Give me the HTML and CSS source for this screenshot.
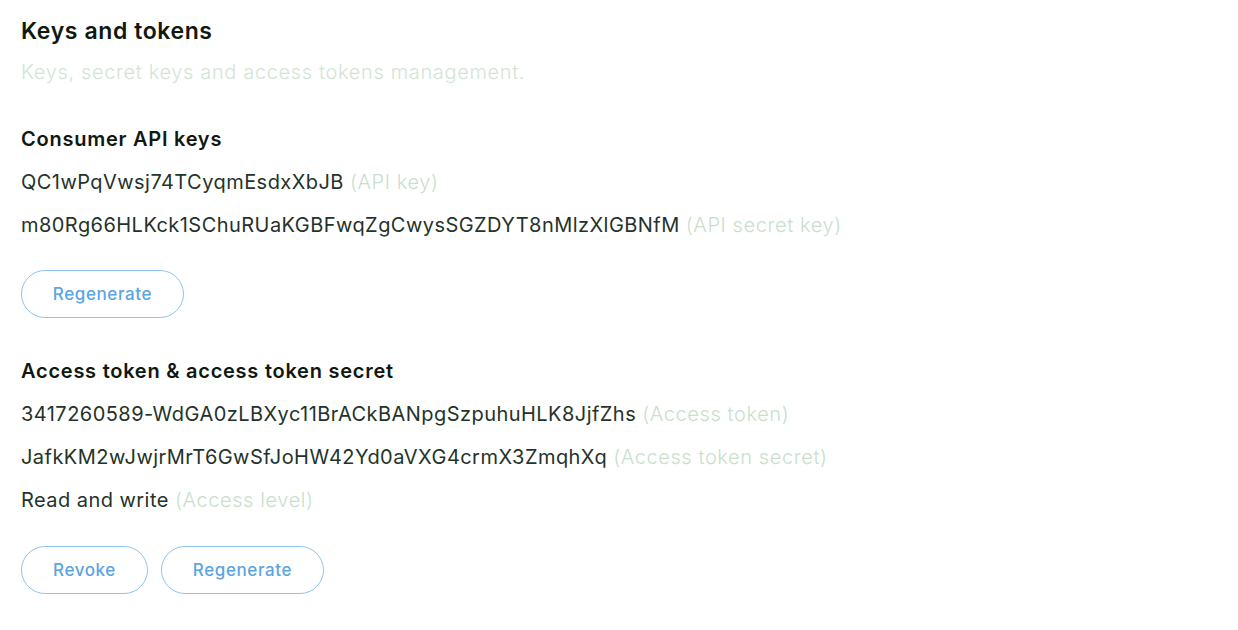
FILE: index.html
```html
<!DOCTYPE html>
<html>
<head>
<meta charset="utf-8">
<link rel="stylesheet" href="styles.css">
</head>
<body>
<main class="page">
  <h1 class="title">Keys and tokens</h1>
  <p class="subtitle">Keys, secret keys and access tokens management.</p>

  <section class="section">
    <h2 class="heading">Consumer API keys</h2>
    <p class="row">QC1wPqVwsj74TCyqmEsdxXbJB <span class="hint">(API key)</span></p>
    <p class="row">m80Rg66HLKck1SChuRUaKGBFwqZgCwysSGZDYT8nMlzXlGBNfM <span class="hint">(API secret key)</span></p>
    <div class="actions">
      <button class="btn btn-wide">Regenerate</button>
    </div>
  </section>

  <section class="section">
    <h2 class="heading">Access token &amp; access token secret</h2>
    <p class="row">3417260589-WdGA0zLBXyc11BrACkBANpgSzpuhuHLK8JjfZhs <span class="hint">(Access token)</span></p>
    <p class="row">JafkKM2wJwjrMrT6GwSfJoHW42Yd0aVXG4crmX3ZmqhXq <span class="hint">(Access token secret)</span></p>
    <p class="row">Read and write <span class="hint">(Access level)</span></p>
    <div class="actions actions-last">
      <button class="btn btn-narrow">Revoke</button>
      <button class="btn btn-wide">Regenerate</button>
    </div>
  </section>
</main>
</body>
</html>
```
FILE: styles.css
```css
html, body {
  margin: 0;
  padding: 0;
  background: #ffffff;
}
body {
  font-family: Inter, "Liberation Sans", Arial, sans-serif;
  color: #1c2a1e;
}
.page {
  padding: 17px 21px 0 21px;
  display: flex;
  flex-direction: column;
}
.title {
  margin: 0;
  font-size: 23px;
  font-weight: 600;
  letter-spacing: 0.6px;
  line-height: 28px;
  color: #101810;
}
.subtitle {
  margin: 15px 0 0 0;
  font-size: 20px;
  font-weight: 300;
  letter-spacing: 0.65px;
  line-height: 24px;
  color: #d2e5d5;
}
.section {
  display: flex;
  flex-direction: column;
}
.section:first-of-type {
  margin-top: 42px;
}
.heading {
  margin: 0;
  font-size: 20px;
  font-weight: 600;
  letter-spacing: 0.75px;
  line-height: 26px;
  color: #101810;
}
.row {
  margin: 17px 0 0 0;
  font-size: 20px;
  letter-spacing: 0.45px;
  line-height: 26px;
  color: #24332a;
}
.hint {
  color: #c8dfcc;
  font-weight: 300;
  letter-spacing: 0.6px;
}
.actions {
  display: flex;
  gap: 13px;
  margin-top: 32px;
  margin-bottom: 40px;
}
.actions-last {
  margin-top: 33px;
}
.btn {
  height: 48px;
  border: 1.5px solid #8ec6ef;
  border-radius: 24px;
  background: #ffffff;
  color: #5aa5e2;
  font-family: Inter, "Liberation Sans", Arial, sans-serif;
  font-size: 17px;
  font-weight: 500;
  letter-spacing: 0.6px;
  padding: 0;
}
.btn-wide { width: 163px; }
.btn-narrow { width: 127px; }
```
